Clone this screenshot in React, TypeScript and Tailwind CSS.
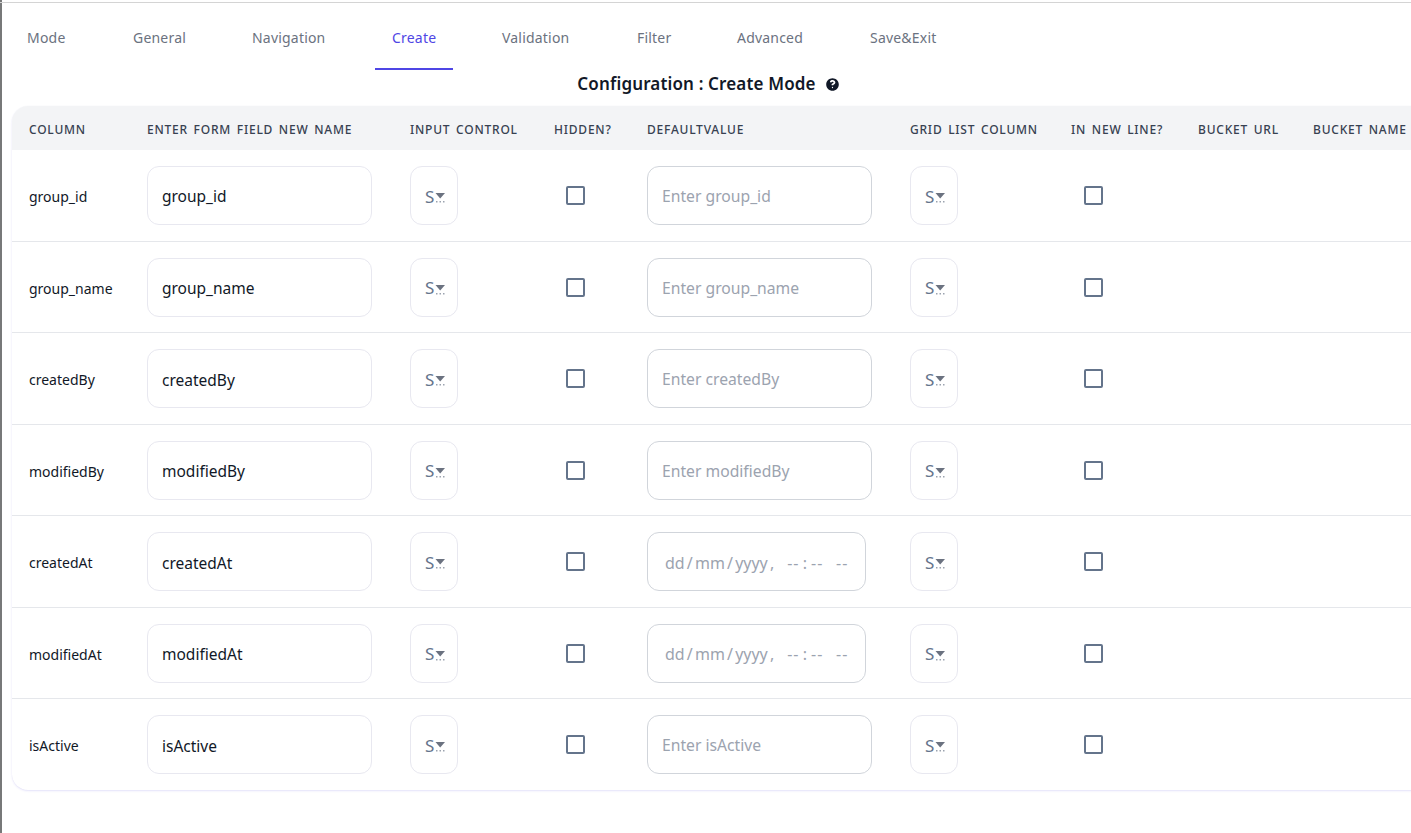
const FONT = "font-['Noto_Sans','Open_Sans',sans-serif]";

const TABS = [
  { label: "Mode", width: "w-[106px]" },
  { label: "General", width: "w-[119px]" },
  { label: "Navigation", width: "w-[140px]" },
  { label: "Create", width: "w-[110px]" },
  { label: "Validation", width: "w-[135px]" },
  { label: "Filter", width: "w-[100px]" },
  { label: "Advanced", width: "w-[133px]" },
  { label: "Save&Exit", width: "w-[134px]" },
];

const HEADERS = [
  { label: "Column", width: "w-[118px]" },
  { label: "Enter Form Field New Name", width: "w-[263px]" },
  { label: "Input Control", width: "w-[144px]" },
  { label: "Hidden?", width: "w-[93px]" },
  { label: "DefaultValue", width: "w-[263px]" },
  { label: "Grid List Column", width: "w-[161px]" },
  { label: "In New Line?", width: "w-[127px]" },
  { label: "Bucket URL", width: "w-[115px]" },
  { label: "Bucket Name", width: "w-[140px]" },
];

const ROWS = [
  { name: "group_id", date: false },
  { name: "group_name", date: false },
  { name: "createdBy", date: false },
  { name: "modifiedBy", date: false },
  { name: "createdAt", date: true },
  { name: "modifiedAt", date: true },
  { name: "isActive", date: false },
];

function SelectBox() {
  return (
    <div className="flex items-center w-12 h-[59px] rounded-xl border border-[#e8e8f0] bg-white pl-[14px] pt-[2px] text-[17px] text-[#64748b]">
      <span>S</span>
      <svg className="ml-[1px] mt-[3px]" width="11" height="10" viewBox="0 0 11 10">
        <path d="M0.5 0h9.5L5.2 5.5z" fill="#6b7280" />
        <rect x="1" y="8" width="1.5" height="1.5" fill="#9ca3af" />
        <rect x="4.5" y="8" width="1.5" height="1.5" fill="#9ca3af" />
        <rect x="8" y="8" width="1.5" height="1.5" fill="#9ca3af" />
      </svg>
    </div>
  );
}

function Checkbox() {
  return <div className="w-[19px] h-[19px] rounded-[2px] border-2 border-[#64748b] bg-white" />;
}

export default function App() {
  return (
    <div className={`${FONT} relative h-[833px] w-[1411px] overflow-hidden bg-white`}>
      {/* window edges */}
      <div className="absolute left-0 top-0 h-full w-[2px] bg-[#777879]" />
      <div className="absolute left-0 top-[2px] h-[1px] w-full bg-[#d4d4d4]" />

      {/* Tabs */}
      <nav className="flex h-[70px] pl-[10px] pt-[3px]">
        {TABS.map(({ label, width }) => (
          <div key={label} className={width}>
            <div
              className={`h-[66.5px] pl-[17px] pt-[25px] text-sm leading-5 tracking-[0.2px] ${
                label === "Create" ? "w-[78px] border-b-2 border-[#4f46e5] text-[#4f46e5]" : "text-[#6b7280]"
              }`}
            >
              {label}
            </div>
          </div>
        ))}
      </nav>

      <h2 className="flex h-[36px] items-center justify-center gap-[10px] pb-[8px] pl-[5px] text-[17px] font-semibold tracking-[0.15px] text-[#111827]">
        Configuration : Create Mode
        <svg width="13" height="13" viewBox="0 0 512 512" fill="#111827">
          <path d="M256 8C119 8 8 119 8 256s111 248 248 248 248-111 248-248S393 8 256 8zm0 393c-15 0-27-12-27-27s12-27 27-27 27 12 27 27-12 27-27 27zm37-129v5c0 7-5 12-12 12h-50c-7 0-12-5-12-12v-10c0-37 28-52 49-64 18-10 29-17 29-30 0-18-23-30-41-30-24 0-35 11-50 31-4 5-12 6-17 2l-30-23c-5-4-6-11-3-16 25-37 56-57 106-57 52 0 107 41 107 94 0 70-76 71-76 98z" />
        </svg>
      </h2>

      {/* Table runs past the right edge of the window */}
      <div className="ml-[12px] w-[1424px] overflow-hidden rounded-2xl shadow-[0_1px_2px_rgba(79,70,229,0.15),0_0_1px_rgba(0,0,0,0.05)]">
        <table className="w-[1424px] table-fixed border-collapse">
          <thead>
            <tr className="h-[44px] bg-[#f3f4f6]">
              {HEADERS.map(({ label, width }) => (
                <th
                  key={label}
                  className={`${width} px-[17px] pt-[3px] text-left text-xs font-medium uppercase tracking-[0.78px] [word-spacing:1.8px] whitespace-nowrap text-[#374151]`}
                >
                  {label}
                </th>
              ))}
            </tr>
          </thead>
          <tbody>
            {ROWS.map(({ name, date }, i) => (
              <tr key={name} className={`h-[91.47px] ${i < ROWS.length - 1 ? "border-b border-[#e5e7eb]" : ""}`}>
                <td className="px-[17px] pt-[3px] text-sm text-[#111827]">{name}</td>
                <td className="px-[17px]">
                  <input
                    readOnly
                    value={name}
                    className="h-[59px] w-[225px] rounded-xl border border-[#e8e8f0] bg-white px-[14px] pt-[2px] text-[15.5px] text-[#111827] outline-none"
                  />
                </td>
                <td className="px-[17px]"><SelectBox /></td>
                <td className="px-[17px]">
                  <div className="flex w-[43px] justify-center"><Checkbox /></div>
                </td>
                <td className="px-[17px]">
                  {date ? (
                    <div className="flex h-[59px] w-[219px] items-center rounded-xl border border-[#d1d5db] bg-white pl-[17px] pt-[2px] text-base whitespace-pre text-[#9ca3af] [word-spacing:-2px]">
                      {"dd / mm / yyyy ,      "}
                      <span className="tracking-[1px]">{"-- : --    --"}</span>
                    </div>
                  ) : (
                    <input
                      readOnly
                      placeholder={`Enter ${name}`}
                      className="h-[59px] w-[225px] rounded-xl border border-[#d1d5db] bg-white px-[14px] pt-[1px] text-[15.7px] outline-none placeholder:text-[#9ca3af]"
                    />
                  )}
                </td>
                <td className="px-[17px]"><SelectBox /></td>
                <td className="px-[17px]">
                  <div className="flex w-[44px] justify-center"><Checkbox /></div>
                </td>
                <td className="px-[17px]" />
                <td className="px-[17px]" />
              </tr>
            ))}
          </tbody>
        </table>
      </div>
    </div>
  );
}
